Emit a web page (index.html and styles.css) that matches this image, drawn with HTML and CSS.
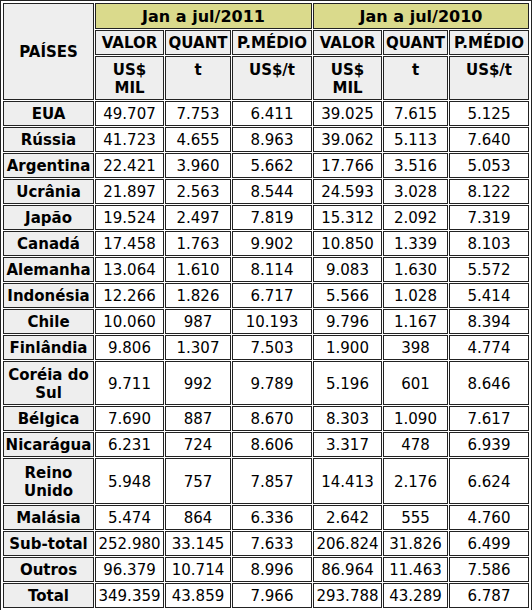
FILE: index.html
```html
<!DOCTYPE html>
<html lang="pt">
<head>
  <meta charset="UTF-8">
  <title>Exportações por país</title>
  <link rel="stylesheet" href="styles.css">
</head>
<body>

  <table class="tabela">
    <colgroup>
      <col class="c-pais">
      <col class="c-valor">
      <col class="c-quant">
      <col class="c-medio">
      <col class="c-valor">
      <col class="c-quant2">
      <col class="c-medio">
    </colgroup>
    <thead>
      <tr class="linha-periodo">
        <th rowspan="3" class="paises">PAÍSES</th>
        <th colspan="3" class="periodo">Jan a jul/2011</th>
        <th colspan="3" class="periodo">Jan a jul/2010</th>
      </tr>
      <tr class="linha-titulos">
        <th>VALOR</th>
        <th>QUANT</th>
        <th>P.MÉDIO</th>
        <th>VALOR</th>
        <th>QUANT</th>
        <th>P.MÉDIO</th>
      </tr>
      <tr class="linha-unidades">
        <th>US$<br>MIL</th>
        <th>t</th>
        <th>US$/t</th>
        <th>US$<br>MIL</th>
        <th>t</th>
        <th>US$/t</th>
      </tr>
    </thead>
    <tbody>
      <tr><th>EUA</th><td>49.707</td><td>7.753</td><td>6.411</td><td>39.025</td><td>7.615</td><td>5.125</td></tr>
      <tr><th>Rússia</th><td>41.723</td><td>4.655</td><td>8.963</td><td>39.062</td><td>5.113</td><td>7.640</td></tr>
      <tr><th>Argentina</th><td>22.421</td><td>3.960</td><td>5.662</td><td>17.766</td><td>3.516</td><td>5.053</td></tr>
      <tr><th>Ucrânia</th><td>21.897</td><td>2.563</td><td>8.544</td><td>24.593</td><td>3.028</td><td>8.122</td></tr>
      <tr><th>Japão</th><td>19.524</td><td>2.497</td><td>7.819</td><td>15.312</td><td>2.092</td><td>7.319</td></tr>
      <tr><th>Canadá</th><td>17.458</td><td>1.763</td><td>9.902</td><td>10.850</td><td>1.339</td><td>8.103</td></tr>
      <tr><th>Alemanha</th><td>13.064</td><td>1.610</td><td>8.114</td><td>9.083</td><td>1.630</td><td>5.572</td></tr>
      <tr><th>Indonésia</th><td>12.266</td><td>1.826</td><td>6.717</td><td>5.566</td><td>1.028</td><td>5.414</td></tr>
      <tr><th>Chile</th><td>10.060</td><td>987</td><td>10.193</td><td>9.796</td><td>1.167</td><td>8.394</td></tr>
      <tr><th>Finlândia</th><td>9.806</td><td>1.307</td><td>7.503</td><td>1.900</td><td>398</td><td>4.774</td></tr>
      <tr class="dupla"><th>Coréia do Sul</th><td>9.711</td><td>992</td><td>9.789</td><td>5.196</td><td>601</td><td>8.646</td></tr>
      <tr><th>Bélgica</th><td>7.690</td><td>887</td><td>8.670</td><td>8.303</td><td>1.090</td><td>7.617</td></tr>
      <tr><th>Nicarágua</th><td>6.231</td><td>724</td><td>8.606</td><td>3.317</td><td>478</td><td>6.939</td></tr>
      <tr class="dupla alta"><th>Reino Unido</th><td>5.948</td><td>757</td><td>7.857</td><td>14.413</td><td>2.176</td><td>6.624</td></tr>
      <tr><th>Malásia</th><td>5.474</td><td>864</td><td>6.336</td><td>2.642</td><td>555</td><td>4.760</td></tr>
      <tr><th>Sub-total</th><td>252.980</td><td>33.145</td><td>7.633</td><td>206.824</td><td>31.826</td><td>6.499</td></tr>
      <tr><th>Outros</th><td>96.379</td><td>10.714</td><td>8.996</td><td>86.964</td><td>11.463</td><td>7.586</td></tr>
      <tr><th>Total</th><td>349.359</td><td>43.859</td><td>7.966</td><td>293.788</td><td>43.289</td><td>6.787</td></tr>
    </tbody>
  </table>

</body>
</html>
```

FILE: styles.css
```css
body {
  margin: 0;
  background: #fff;
  font-family: "DejaVu Sans", Verdana, sans-serif;
  font-size: 15px;
  line-height: 18px;
  color: #000;
}
.tabela {
  width: 532px;
  table-layout: fixed;
  border-collapse: separate;
  border-spacing: 1px;
  padding: 1px;
  border: 1px solid #222;
}
.c-pais { width: 91px; }
.c-valor { width: 69px; }
.c-quant { width: 66px; }
.c-quant2 { width: 65px; }
.c-medio { width: 80px; }
th, td {
  border: 1px solid #222;
  text-align: center;
  padding: 3px 0 2px;
  height: 18px;
  overflow: hidden;
  white-space: nowrap;
}
th {
  font-weight: bold;
  background-color: #eeeeee;
}
td {
  background-color: #fff;
}
.paises {
  vertical-align: middle;
}
.periodo {
  background-color: #dada8c;
  padding: 4px 0 2px;
  font-size: 16px;
}
.linha-titulos th {
  padding: 3px 0 2px;
}
.linha-unidades th {
  vertical-align: top;
  padding: 4px 0 0;
  height: 38px;
}
.dupla th {
  white-space: normal;
}
.dupla th, .dupla td {
  height: 37px;
}
.alta th, .alta td {
  height: 39px;
}
```
